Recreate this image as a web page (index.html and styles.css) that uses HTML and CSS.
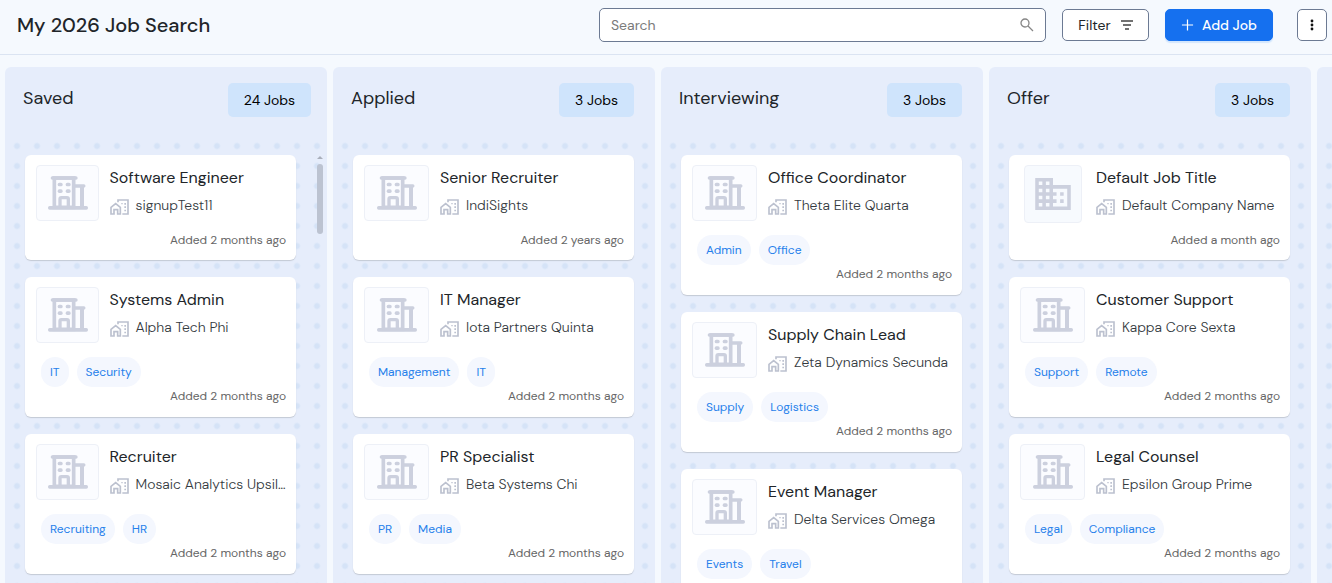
FILE: index.html
```html
<!DOCTYPE html>
<html lang="en">
<head>
	<meta charset="UTF-8">
	<meta name="viewport" content="width=device-width, initial-scale=1">
	<title>My 2026 Job Search</title>
	<link rel="stylesheet" href="styles.css">
</head>
<body>

<svg class="sprite" aria-hidden="true">
	<symbol id="office" viewBox="0 0 120 100">
		<rect x="19" y="5" width="58" height="88" fill="none" stroke="currentColor" stroke-width="11"/>
		<rect x="8" y="0" width="81" height="10" rx="5"/>
		<rect x="0" y="89" width="120" height="11" rx="5"/>
		<path d="M80 24h27a5 5 0 0 1 1 10v58H96V34H80z"/>
		<rect x="29" y="19" width="15" height="11" rx="5"/>
		<rect x="53" y="19" width="15" height="11" rx="5"/>
		<rect x="29" y="39" width="15" height="11" rx="5"/>
		<rect x="53" y="39" width="15" height="11" rx="5"/>
		<path d="M36 92V68q0-4 4-4h17q4 0 4 4v24" fill="none" stroke="currentColor" stroke-width="10"/>
	</symbol>
	<symbol id="business" viewBox="2 3 20 18">
		<path d="M12 7V3H2v18h20V7H12zM6 19H4v-2h2v2zm0-4H4v-2h2v2zm0-4H4V9h2v2zm0-4H4V5h2v2zm4 12H8v-2h2v2zm0-4H8v-2h2v2zm0-4H8V9h2v2zm0-4H8V5h2v2zm10 12h-8v-2h2v-2h-2v-2h2v-2h-2V9h8v10zm-2-8h-2v2h2v-2zm0 4h-2v2h2v-2z"/>
	</symbol>
	<symbol id="company" viewBox="0 0 57 48">
		<g fill="none" stroke="currentColor" stroke-width="5">
			<path d="M3 45V25L17 14l14 11v20h-8V32H12v13z"/>
			<path d="M24 10V3h30v42H37"/>
		</g>
		<path d="M34 12h4v4h-4zM43 12h5v5h-5zM43 22h5v5h-5zM43 32h5v5h-5z"/>
	</symbol>
</svg>

<header class="topbar">
	<h1>My 2026 Job Search</h1>
	<label class="search">
		<input type="search" placeholder="Search" aria-label="Search">
		<svg width="14" height="14" viewBox="0 0 14 14"><circle cx="5" cy="5" r="4"/><path d="M8 8l5 5"/></svg>
	</label>
	<button class="filter" type="button">Filter
		<svg width="12" height="10" viewBox="0 0 12 10"><path d="M0 1h12M2 5h8M4 9h4"/></svg>
	</button>
	<button class="add" type="button">
		<svg width="14" height="14" viewBox="0 0 14 14"><path d="M7 1v12M1 7h12"/></svg>
		Add Job
	</button>
	<button class="more" type="button" aria-label="More">
		<svg width="4" height="12" viewBox="0 0 4 12"><circle cx="2" cy="2" r="1.4"/><circle cx="2" cy="6" r="1.4"/><circle cx="2" cy="10" r="1.4"/></svg>
	</button>
</header>

<main class="board">

	<section class="column scrolls">
		<header><h2>Saved</h2><span class="count">24 Jobs</span></header>
		<div class="list">
			<article class="card">
				<div class="head">
					<div class="logo"><svg><use href="#office"/></svg></div>
					<div class="info">
						<h3>Software Engineer</h3>
						<p><svg><use href="#company"/></svg><span>signupTest11</span></p>
					</div>
				</div>
				<time>Added 2 months ago</time>
			</article>
			<article class="card">
				<div class="head">
					<div class="logo"><svg><use href="#office"/></svg></div>
					<div class="info">
						<h3>Systems Admin</h3>
						<p><svg><use href="#company"/></svg><span>Alpha Tech Phi</span></p>
					</div>
				</div>
				<ul class="tags"><li>IT</li><li>Security</li></ul>
				<time>Added 2 months ago</time>
			</article>
			<article class="card">
				<div class="head">
					<div class="logo"><svg><use href="#office"/></svg></div>
					<div class="info">
						<h3>Recruiter</h3>
						<p><svg><use href="#company"/></svg><span>Mosaic Analytics Upsil…</span></p>
					</div>
				</div>
				<ul class="tags"><li>Recruiting</li><li>HR</li></ul>
				<time>Added 2 months ago</time>
			</article>
		</div>
		<div class="scrollbar"><i></i><b></b></div>
	</section>

	<section class="column">
		<header><h2>Applied</h2><span class="count">3 Jobs</span></header>
		<div class="list">
			<article class="card">
				<div class="head">
					<div class="logo"><svg><use href="#office"/></svg></div>
					<div class="info">
						<h3>Senior Recruiter</h3>
						<p><svg><use href="#company"/></svg><span>IndiSights</span></p>
					</div>
				</div>
				<time>Added 2 years ago</time>
			</article>
			<article class="card">
				<div class="head">
					<div class="logo"><svg><use href="#office"/></svg></div>
					<div class="info">
						<h3>IT Manager</h3>
						<p><svg><use href="#company"/></svg><span>Iota Partners Quinta</span></p>
					</div>
				</div>
				<ul class="tags"><li>Management</li><li>IT</li></ul>
				<time>Added 2 months ago</time>
			</article>
			<article class="card">
				<div class="head">
					<div class="logo"><svg><use href="#office"/></svg></div>
					<div class="info">
						<h3>PR Specialist</h3>
						<p><svg><use href="#company"/></svg><span>Beta Systems Chi</span></p>
					</div>
				</div>
				<ul class="tags"><li>PR</li><li>Media</li></ul>
				<time>Added 2 months ago</time>
			</article>
		</div>
	</section>

	<section class="column">
		<header><h2>Interviewing</h2><span class="count">3 Jobs</span></header>
		<div class="list">
			<article class="card">
				<div class="head">
					<div class="logo"><svg><use href="#office"/></svg></div>
					<div class="info">
						<h3>Office Coordinator</h3>
						<p><svg><use href="#company"/></svg><span>Theta Elite Quarta</span></p>
					</div>
				</div>
				<ul class="tags"><li>Admin</li><li>Office</li></ul>
				<time>Added 2 months ago</time>
			</article>
			<article class="card">
				<div class="head">
					<div class="logo"><svg><use href="#office"/></svg></div>
					<div class="info">
						<h3>Supply Chain Lead</h3>
						<p><svg><use href="#company"/></svg><span>Zeta Dynamics Secunda</span></p>
					</div>
				</div>
				<ul class="tags"><li>Supply</li><li>Logistics</li></ul>
				<time>Added 2 months ago</time>
			</article>
			<article class="card">
				<div class="head">
					<div class="logo"><svg><use href="#office"/></svg></div>
					<div class="info">
						<h3>Event Manager</h3>
						<p><svg><use href="#company"/></svg><span>Delta Services Omega</span></p>
					</div>
				</div>
				<ul class="tags"><li>Events</li><li>Travel</li></ul>
			</article>
		</div>
	</section>

	<section class="column">
		<header><h2>Offer</h2><span class="count">3 Jobs</span></header>
		<div class="list">
			<article class="card">
				<div class="head">
					<div class="logo square"><svg><use href="#business"/></svg></div>
					<div class="info">
						<h3>Default Job Title</h3>
						<p><svg><use href="#company"/></svg><span>Default Company Name</span></p>
					</div>
				</div>
				<time>Added a month ago</time>
			</article>
			<article class="card">
				<div class="head">
					<div class="logo"><svg><use href="#office"/></svg></div>
					<div class="info">
						<h3>Customer Support</h3>
						<p><svg><use href="#company"/></svg><span>Kappa Core Sexta</span></p>
					</div>
				</div>
				<ul class="tags"><li>Support</li><li>Remote</li></ul>
				<time>Added 2 months ago</time>
			</article>
			<article class="card">
				<div class="head">
					<div class="logo"><svg><use href="#office"/></svg></div>
					<div class="info">
						<h3>Legal Counsel</h3>
						<p><svg><use href="#company"/></svg><span>Epsilon Group Prime</span></p>
					</div>
				</div>
				<ul class="tags"><li>Legal</li><li>Compliance</li></ul>
				<time>Added 2 months ago</time>
			</article>
		</div>
	</section>

	<section class="column">
		<header></header>
		<div class="list"></div>
	</section>

</main>
</body>
</html>
```
FILE: styles.css
```css
* {
	box-sizing: border-box;
}
html, body {
	height: 100%;
	margin: 0;
}
body {
	display: flex;
	flex-direction: column;
	overflow: hidden;
	background: #f5f9fe;
	color: #212529;
	font-family: "DM Sans", Inter, "Liberation Sans", sans-serif;
	font-size: 14px;
}
h1, h2, h3, p, ul {
	margin: 0;
	padding: 0;
}
button, input {
	font: inherit;
	color: inherit;
}
.sprite {
	display: none;
}

/* top bar */
.topbar {
	flex: none;
	display: flex;
	align-items: center;
	gap: 16px;
	padding: 8px 5px 12px 17px;
	border-bottom: 1px solid #dbe4f2;
}
.topbar h1 {
	flex: 1;
	font-size: 20px;
	line-height: 24px;
	font-weight: 500;
	white-space: nowrap;
}
.search {
	flex: 0 1 447px;
	display: flex;
	align-items: center;
	height: 34px;
	padding: 0 11px;
	background: #fff;
	border: 1px solid #6c7a93;
	border-radius: 5px;
}
.search input {
	flex: 1;
	min-width: 0;
	padding: 0;
	border: 0;
	outline: 0;
	background: none;
}
.search input::placeholder {
	color: #7b7b7b;
}
.topbar svg {
	fill: none;
	stroke: currentColor;
	stroke-width: 1.3;
}
.search svg {
	color: #868686;
}
.topbar button {
	display: flex;
	align-items: center;
	justify-content: center;
	height: 32px;
	padding: 0 15px;
	background: #fff;
	border: 1px solid #6c7a93;
	border-radius: 5px;
	white-space: nowrap;
}
.topbar .filter {
	gap: 10px;
	width: 87px;
}
.topbar .filter svg {
	color: #444;
}
.topbar .add {
	gap: 8px;
	width: 108px;
	background: #1570ef;
	border-color: #1570ef;
	box-shadow: 0 2px 1px #d3e6fd;
	color: #fff;
	font-weight: 500;
}
.topbar .more {
	width: 30px;
	margin-left: 8px;
	padding: 0;
}
.topbar .more svg {
	fill: #111;
	stroke: none;
}

/* board */
.board {
	flex: 1;
	min-height: 0;
	display: flex;
	gap: 6px;
	padding: 12px 0 0 5px;
	overflow: hidden;
}
.column {
	flex: 0 0 322px;
	position: relative;
	display: flex;
	flex-direction: column;
	background: #e6edfb;
	border-radius: 6px 6px 0 0;
}
.column > header {
	display: flex;
	justify-content: space-between;
	height: 68px;
	padding: 16px 21px 0 18px;
}
.scrolls > header {
	padding-right: 16px;
}
.column h2 {
	font-size: 18px;
	line-height: 30px;
	font-weight: 400;
}
.count {
	height: 34px;
	padding: 0 16px;
	background: #cfe4fc;
	border-radius: 5px;
	color: #000;
	line-height: 34px;
}
.list {
	flex: 1;
	min-height: 0;
	display: flex;
	flex-direction: column;
	gap: 17px;
	padding: 20px 21px 0 20px;
	background: radial-gradient(circle, #d5e3f7 2px, transparent 4px) 2px 1px / 20px 20px;
}
.scrolls .list {
	padding-right: 31px;
}
.scrollbar {
	position: absolute;
	top: 89px;
	right: 4px;
	width: 6px;
}
.scrollbar i {
	display: block;
	height: 3px;
	margin-bottom: 5px;
	background: #a9afbb;
	clip-path: polygon(50% 0, 100% 100%, 0 100%);
}
.scrollbar b {
	display: block;
	height: 70px;
	background: #bcc3d1;
	border-radius: 3px;
}

/* job cards */
.card {
	flex: none;
	padding: 10px 10px 12px 11px;
	background: #fff;
	border-radius: 6px;
	box-shadow: 0 1px 1px #c3c9d4;
}
.head {
	display: flex;
	gap: 11px;
	height: 58px;
}
.logo {
	flex: none;
	display: flex;
	align-items: center;
	justify-content: center;
	width: 25%;
	height: 56px;
	padding-left: 1px;
	background: #fbfcff;
	border: 1px solid #edf0f7;
	border-radius: 4px;
	color: #ccd0de;
}
.logo svg {
	width: 40px;
	height: 34px;
	fill: currentColor;
}
.logo.square {
	width: 58px;
	height: 58px;
	margin: 0 3px 0 4px;
	padding: 0;
	background: #f7fafe;
}
.logo.square svg {
	width: 36px;
	height: 32px;
}
.info {
	flex: 1;
	min-width: 0;
}
.card h3 {
	font-size: 16px;
	line-height: 26px;
	font-weight: 400;
	white-space: nowrap;
}
.card p {
	display: flex;
	align-items: center;
	gap: 7px;
	color: #343a40;
	line-height: 28px;
	font-weight: 300;
}
.card p svg {
	flex: none;
	width: 19px;
	height: 16px;
	margin-top: 3px;
	color: #bcc1cf;
	fill: currentColor;
}
.card p span {
	white-space: nowrap;
}
.tags {
	display: flex;
	gap: 8px;
	margin: 12px 0 0 5px;
	list-style: none;
}
.tags li {
	padding: 0 9px;
	background: #f4f7fe;
	border-radius: 15px;
	color: #2680eb;
	font-size: 12px;
	line-height: 30px;
}
.card time {
	display: block;
	margin: 8px 0 -1px;
	color: #666;
	font-size: 12px;
	line-height: 18px;
	text-align: right;
}
.tags + time {
	margin: 0;
}
```
